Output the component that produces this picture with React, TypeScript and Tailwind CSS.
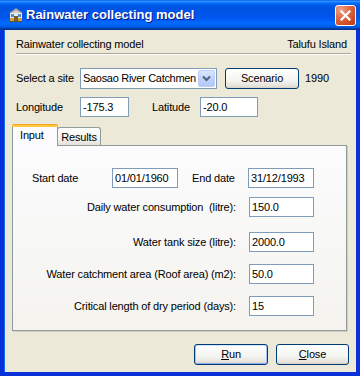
import React from "react";

const font = "font-['Liberation_Sans',Arial,sans-serif] text-[11px] tracking-[-0.15px] text-black";

const TextBox = ({ value, className = "" }: { value: string; className?: string }) => (
  <div
    className={`h-[20px] border border-[#7F9DB9] bg-white pl-[2px] flex items-center leading-none whitespace-nowrap overflow-hidden ${className}`}
  >
    {value}
  </div>
);

const XpButton = ({
  children,
  className = "",
  isDefault = false,
}: {
  children: React.ReactNode;
  className?: string;
  isDefault?: boolean;
}) => (
  <div
    className={`h-[21px] rounded-[3px] border border-[#003C74] bg-[linear-gradient(to_bottom,#FFFFFF_0%,#F4F4F0_60%,#E4E1D8_90%,#D6D0C5_100%)] flex items-center justify-center ${
      isDefault ? "shadow-[inset_1px_0_0_#A8C3F5,inset_-1px_0_0_#A8C3F5,inset_0_-1px_0_#8BA9EE,inset_0_1px_0_#CEE7FF]" : ""
    } ${className}`}
  >
    {children}
  </div>
);

const AppIcon = () => (
  <svg width="16" height="16" viewBox="0 0 16 16">
    <polygon points="1,6 8,1 15,6" fill="#9A9A9A" />
    <polygon points="3,6 8,2.5 13,6" fill="#C8C8C8" />
    <rect x="2" y="6" width="12" height="7" fill="#E8EEF6" />
    <rect x="3" y="7" width="3" height="3" fill="#5E86C9" />
    <rect x="10" y="7" width="3" height="3" fill="#5E86C9" />
    <rect x="2" y="11" width="12" height="4" fill="#C9A23F" />
    <rect x="6" y="9" width="4" height="6" fill="#7A5A2A" />
    <rect x="2" y="14" width="12" height="1" fill="#6B4E1E" />
  </svg>
);

const CloseBox = () => (
  <div className="w-[21px] h-[21px] rounded-[3px] border border-white bg-[radial-gradient(circle_at_25%_20%,#EBA38A_0%,#DE6B48_40%,#CC4B24_75%,#B83A16_100%)] flex items-center justify-center">
    <svg width="11" height="11" viewBox="0 0 11 11">
      <path d="M1.5 1.5 L9.5 9.5 M9.5 1.5 L1.5 9.5" stroke="white" strokeWidth="2.2" strokeLinecap="square" />
    </svg>
  </div>
);

const rows = [
  { label: "Daily water consumption  (litre):", value: "150.0", mt: "mt-[9px]" },
  { label: "Water tank size (litre):", value: "2000.0", mt: "mt-[15px]" },
  { label: "Water catchment area (Roof area) (m2):", value: "50.0", mt: "mt-[12px]" },
  { label: "Critical length of dry period (days):", value: "15", mt: "mt-[12px]" },
];

export default function App() {
  return (
    <div className={`w-[360px] h-[376px] flex flex-col bg-[#0831D9] ${font}`}>
      {/* title bar */}
      <div className="h-[30px] shrink-0 flex items-center pl-[8px] pr-[4px] bg-[linear-gradient(to_bottom,#0058EE_0%,#3593FF_4%,#288EFF_6%,#127DFF_8%,#036FFC_10%,#0262EE_14%,#0057E5_20%,#0054E3_24%,#0055EB_56%,#005BF5_66%,#026AFE_76%,#0062EF_86%,#0052D6_92%,#0040AB_94%,#003092_100%)]">
        <AppIcon />
        <div className="ml-[2px] flex-1 text-white font-bold text-[13px] tracking-[0px] [text-shadow:1px_1px_0_#0A1883]">
          Rainwater collecting model
        </div>
        <CloseBox />
      </div>

      {/* body */}
      <div className="flex-1 mx-[4px] mb-[4px] bg-[#ECE9D8] flex flex-col bg-clip-padding border-l border-[#166AEE]">
        <div className="mt-[7px] h-[14px] pl-[11px] pr-[9px] flex items-center justify-between leading-none">
          <span>Rainwater collecting model</span>
          <span>Talufu Island</span>
        </div>
        <div className="mt-[2px] ml-[11px] mr-[5px] h-[2px] border-t border-[#ACA899] border-b border-b-white" />

        {/* site row */}
        <div className="mt-[13px] pl-[11px] flex items-center h-[21px]">
          <span className="w-[64px]">Select a site</span>
          <div className="w-[137px] h-[21px] border border-[#7F9DB9] bg-white flex items-center">
            <span className="flex-1 pl-[2px] whitespace-nowrap overflow-hidden tracking-[-0.3px]">Saosao River Catchmen</span>
            <div className="w-[17px] h-[17px] mr-[1px] shrink-0 rounded-[2px] bg-[linear-gradient(to_bottom,#DCE6FD_0%,#C1D3FB_50%,#B4C8F6_100%)] border border-[#B9CDF8] flex items-center justify-center">
              <svg width="9" height="7" viewBox="0 0 9 7">
                <path d="M1 1.5 L4.5 5 L8 1.5" stroke="#4D6185" strokeWidth="2" fill="none" />
              </svg>
            </div>
          </div>
          <XpButton className="ml-[8px] w-[74px]">Scenario</XpButton>
          <span className="ml-[6px]">1990</span>
        </div>

        {/* coordinates row */}
        <div className="mt-[8px] pl-[11px] flex items-center h-[20px]">
          <span className="w-[64px]">Longitude</span>
          <TextBox value="-175.3" className="w-[49px]" />
          <span className="ml-[23px] w-[48px]">Latitude</span>
          <TextBox value="-20.0" className="w-[58px]" />
        </div>

        {/* tabs */}
        <div className="mt-[7px] ml-[7px] flex items-end h-[21px] relative z-10">
          <div className="w-[46px] h-[22px] -mb-px bg-[#FCFCFE] border-x border-[#919B9C] rounded-t-[3px] flex flex-col">
            <div className="h-[3px] rounded-t-[2px] bg-[linear-gradient(to_bottom,#E68B2C_0%,#FFC73C_40%,#FFC73C_100%)] -mx-px" />
            <div className="flex-1 flex items-center pl-[7px] pb-[2px]">Input</div>
          </div>
          <div className="w-[44px] h-[18px] -ml-px bg-[linear-gradient(to_bottom,#FFFFFF_0%,#F3F3EF_60%,#E3E1D8_100%)] border border-b-0 border-[#919B9C] rounded-t-[3px] flex items-center justify-center pt-[1px]">
            Results
          </div>
        </div>

        {/* tab panel */}
        <div className="ml-[7px] mr-[9px] h-[186px] border border-[#919B9C] bg-[linear-gradient(to_bottom,#FCFCFE_0%,#F4F3EE_100%)] shadow-[1px_1px_0_#D0CEBF] flex flex-col">
          <div className="mt-[22px] pl-[19px] flex items-center h-[20px]">
            <span className="w-[80px]">Start date</span>
            <TextBox value="01/01/1960" className="w-[66px]" />
            <span className="ml-[14px] w-[56px]">End date</span>
            <TextBox value="31/12/1993" className="w-[66px]" />
          </div>
          {rows.map((r) => (
            <div key={r.label} className={`${r.mt} pr-[32px] flex items-center justify-end h-[20px]`}>
              <span className="whitespace-pre">{r.label}</span>
              <TextBox value={r.value} className="ml-[13px] w-[65px]" />
            </div>
          ))}
        </div>

        {/* buttons */}
        <div className="mt-[13px] mr-[7px] flex justify-end gap-[8px]">
          <XpButton className="w-[74px]" isDefault>
            <span>
              <span className="underline">R</span>un
            </span>
          </XpButton>
          <XpButton className="w-[73px]">
            <span>
              <span className="underline">C</span>lose
            </span>
          </XpButton>
        </div>
      </div>
    </div>
  );
}
